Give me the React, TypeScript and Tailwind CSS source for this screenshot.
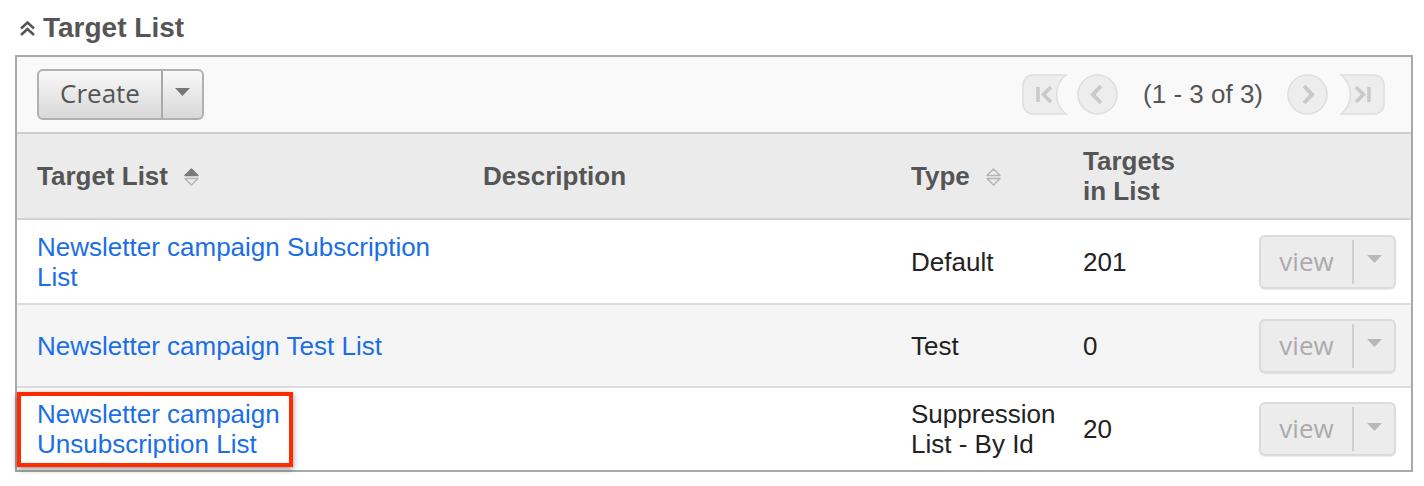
import React from "react";

const Caret = ({ color }: { color: string }) => (
  <svg width="15" height="9" viewBox="0 0 15 9">
    <path d="M0 0 H15 L7.5 8 Z" fill={color} />
  </svg>
);

const SortIcon = ({ active }: { active: boolean }) => (
  <svg width="17" height="20" viewBox="0 0 17 20">
    <path
      d="M2 8.5 L8.5 2 L15 8.5 Z"
      fill={active ? "#7a7a7a" : "none"}
      stroke={active ? "#7a7a7a" : "#b5b5b5"}
      strokeWidth="1.5"
      strokeLinejoin="round"
    />
    <path
      d="M2 11.5 L8.5 18 L15 11.5 Z"
      fill="none"
      stroke="#b5b5b5"
      strokeWidth="1.5"
      strokeLinejoin="round"
    />
  </svg>
);

const FirstIcon = () => (
  <svg width="46" height="41" viewBox="0 0 46 41">
    <path
      d="M11 1 H44 A25 25 0 0 0 44 40 H11 A10 10 0 0 1 1 30 V11 A10 10 0 0 1 11 1 Z"
      fill="#ededed"
      stroke="#dedede"
      strokeWidth="1.5"
    />
    <path d="M16 13 V28" stroke="#c9c9c9" strokeWidth="3.5" />
    <path d="M29 13 L21.5 20.5 L29 28" stroke="#c9c9c9" strokeWidth="3.5" fill="none" />
  </svg>
);

const LastIcon = () => (
  <svg width="46" height="41" viewBox="0 0 46 41">
    <path
      d="M2 1 H35 A10 10 0 0 1 45 11 V30 A10 10 0 0 1 35 40 H2 A25 25 0 0 0 2 1 Z"
      fill="#ededed"
      stroke="#dedede"
      strokeWidth="1.5"
    />
    <path d="M30 13 V28" stroke="#c9c9c9" strokeWidth="3.5" />
    <path d="M17 13 L24.5 20.5 L17 28" stroke="#c9c9c9" strokeWidth="3.5" fill="none" />
  </svg>
);

const CircleIcon = ({ dir }: { dir: "l" | "r" }) => (
  <svg width="41" height="41" viewBox="0 0 41 41">
    <circle cx="20.5" cy="20.5" r="19.5" fill="#ededed" stroke="#dedede" strokeWidth="1.5" />
    <path
      d={dir === "l" ? "M24 12 L16 20.5 L24 29" : "M17 12 L25 20.5 L17 29"}
      stroke="#c9c9c9"
      strokeWidth="4"
      fill="none"
    />
  </svg>
);

const ViewButton = () => (
  <div className="flex h-[54px] w-[137px] items-stretch rounded-[6px] border-2 border-[#dcdcdc] bg-[#ececec] shadow-[0_1px_1px_rgba(0,0,0,0.08)]">
    <div className="flex flex-1 items-center justify-center text-[26px] text-[#ababab] font-['Open_Sans',sans-serif] pb-[2px]">
      view
    </div>
    <div className="my-[3px] w-[2px] bg-[#cfcfcf]" />
    <div className="flex w-[40px] items-center justify-center pb-[4px]">
      <Caret color="#b8b8b8" />
    </div>
  </div>
);

const cols = "grid grid-cols-[446px_428px_172px_176px_1fr]";

export default function App() {
  return (
    <div className="w-[1424px] h-[486px] bg-white pl-[15px] pr-[11px] font-['Liberation_Sans',Arial,sans-serif]">
      <div className="flex h-[55px] items-center">
        <svg width="17" height="16" viewBox="0 0 17 16" className="ml-[4px] mr-[7px] mt-[2px]">
          <path d="M2 7.5 L8.5 1.5 L15 7.5" stroke="#555" strokeWidth="2.5" fill="none" />
          <path d="M2 14 L8.5 8 L15 14" stroke="#555" strokeWidth="2.5" fill="none" />
        </svg>
        <h2 className="text-[28px] font-bold text-[#555] leading-none">Target List</h2>
      </div>

      <div className="border-2 border-[#a9a9a9]">
        {/* toolbar */}
        <div className="flex h-[77px] items-center justify-between border-b-2 border-[#cdcdcd] bg-[#f9f9f9] pl-[20px] pr-[26px]">
          <div className="flex h-[51px] w-[167px] items-stretch rounded-[6px] border-2 border-[#b0b0b0] bg-gradient-to-b from-[#f8f8f8] to-[#d9d9d9]">
            <div className="flex w-[122px] items-center justify-center text-[26px] text-[#555] font-['Open_Sans',sans-serif] pb-[2px]">
              Create
            </div>
            <div className="w-[2px] bg-[#a9a9a9]" />
            <div className="flex flex-1 items-center justify-center pb-[4px]">
              <Caret color="#777" />
            </div>
          </div>
          <div className="flex items-center">
            <FirstIcon />
            <div className="ml-[9px]">
              <CircleIcon dir="l" />
            </div>
            <span className="ml-[25px] mr-[24px] text-[26px] text-[#555]">(1 - 3 of 3)</span>
            <CircleIcon dir="r" />
            <div className="ml-[11px]">
              <LastIcon />
            </div>
          </div>
        </div>

        {/* header */}
        <div className={`${cols} h-[86px] items-center border-b-2 border-[#d2d2d2] bg-[#ebebeb] text-[26px] font-bold text-[#555] leading-[30px]`}>
          <div className="flex items-center pl-[20px]">
            Target List
            <span className="ml-[15px] mt-[2px] flex">
              <SortIcon active />
            </span>
          </div>
          <div className="pl-[20px]">Description</div>
          <div className="flex items-center pl-[20px]">
            Type
            <span className="ml-[15px] mt-[2px] flex">
              <SortIcon active={false} />
            </span>
          </div>
          <div className="pl-[20px]">
            Targets
            <br />
            in List
          </div>
          <div />
        </div>

        {/* row 1 */}
        <div className={`${cols} h-[85px] items-center border-b-2 border-[#dcdcdc] bg-white text-[26px] leading-[30px] text-[#222]`}>
          <div className="pl-[20px] pr-[10px] text-[#1a6ee6]">
            Newsletter campaign Subscription
            <br />
            List
          </div>
          <div />
          <div className="pl-[20px]">Default</div>
          <div className="pl-[20px]">201</div>
          <div className="pl-[20px]">
            <ViewButton />
          </div>
        </div>

        {/* row 2 */}
        <div className={`${cols} h-[83px] items-center border-b-2 border-[#dcdcdc] bg-[#f5f5f5] text-[26px] leading-[30px] text-[#222]`}>
          <div className="pl-[20px] pr-[10px] text-[#1a6ee6]">Newsletter campaign Test List</div>
          <div />
          <div className="pl-[20px]">Test</div>
          <div className="pl-[20px]">0</div>
          <div className="pl-[20px]">
            <ViewButton />
          </div>
        </div>

        {/* row 3 */}
        <div className={`${cols} h-[82px] items-center bg-white text-[26px] leading-[30px] text-[#222]`}>
          <div className="relative flex h-full items-center pl-[20px] pr-[10px] text-[#1a6ee6]">
            <div>
              Newsletter campaign
              <br />
              Unsubscription List
            </div>
            <div className="absolute left-0 top-[4px] h-[75px] w-[276px] border-[4px] border-[#ff2a00] shadow-[0_2px_6px_rgba(0,0,0,0.45)]" />
          </div>
          <div />
          <div className="pl-[20px] pr-[4px]">Suppression List - By Id</div>
          <div className="pl-[20px]">20</div>
          <div className="pl-[20px]">
            <ViewButton />
          </div>
        </div>
      </div>
    </div>
  );
}
